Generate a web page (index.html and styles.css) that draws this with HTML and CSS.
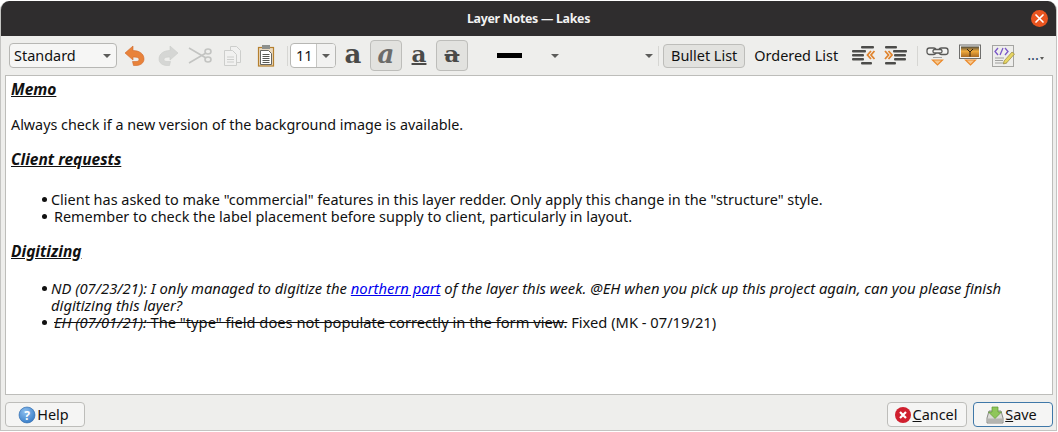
FILE: index.html
```html
<!DOCTYPE html>
<html lang="en">
<head>
<meta charset="utf-8">
<title>Layer Notes — Lakes</title>
<link rel="stylesheet" href="styles.css">
</head>
<body>
<div class="window">
  <header class="titlebar">
    <span class="title">Layer Notes — Lakes</span>
    <span class="close"><svg width="17" height="17" viewBox="0 0 17 17"><path d="M5 5l7 7M12 5l-7 7" stroke="#fff" stroke-width="1.700" stroke-linecap="round"/></svg></span>
  </header>
  <div class="toolbar">
    <div class="combo style-combo"><span>Standard</span><i class="caret"></i></div>
    <div class="icons first">
      <svg class="ic" viewBox="0 0 22 22"><path d="M1 8l8-7v4.500c6 0 11 3 11 8.500 0 4-3.500 6.500-8 6.500H9.500l-1-4H12c2 0 3-.8 3-2.200 0-1.600-2-2.300-6-2.300V15z" fill="#e8823a" stroke="#d0682a" stroke-width=".6"/></svg>
      <svg class="ic" viewBox="0 0 22 22"><path d="M21 8l-8-7v4.500c-6 0-11 3-11 8.500 0 4 3.500 6.500 8 6.500h2.500l1-4H10c-2 0-3-.8-3-2.200 0-1.600 2-2.300 6-2.300V15z" fill="#d5d6d4" stroke="#cbccca" stroke-width=".6"/></svg>
      <svg class="ic" viewBox="0 0 22 22"><g fill="none" stroke="#c3c4c2" stroke-width="1.600"><path d="M0 3l17 10M0 18L17 8"/><ellipse cx="19" cy="6.500" rx="3" ry="2.500"/><ellipse cx="19" cy="14.500" rx="3" ry="2.500"/></g></svg>
      <svg class="ic" viewBox="0 0 22 22"><g fill="#f1f1f0" stroke="#cdcecc"><path d="M8.500 1.500h6l4 4v12h-10z"/><path d="M2.500 5.500h8l4 4v11h-12z"/><path d="M5 12h7M5 14.500h7M5 17h7" fill="none"/></g></svg>
      <svg class="ic" viewBox="0 0 22 22"><rect x="4.500" y="2.500" width="15" height="18.500" fill="#ead9bf" stroke="#b5802f" stroke-width="1.200"/><rect x="8" y="0" width="8" height="4" fill="#8d908d"/><path d="M6.500 5.500h8l3 3v11h-11z" fill="#fff" stroke="#555753" stroke-width=".9"/><path d="M8.500 9.500h7M8.500 11.500h7M8.500 13.500h7M8.500 15.500h7M8.500 17.500h7" stroke="#555753"/></svg>
    </div>
    <i class="sep sep-a"></i>
    <div class="combo size-combo"><span class="size-val">11</span><span class="size-btn"><i class="caret"></i></span></div>
    <div class="fmt">
      <span class="fbtn"><span class="glyph bold">a</span></span>
      <span class="fbtn on"><span class="glyph ital">a</span></span>
      <span class="fbtn"><span class="glyph und">a</span></span>
      <span class="fbtn on"><span class="glyph str">a</span></span>
    </div>
    <div class="color"><i class="swatch"></i><i class="caret"></i></div>
    <div class="spacer"><i class="caret"></i></div>
    <i class="sep sep-b"></i>
    <span class="tbtn on">Bullet List</span>
    <span class="tbtn">Ordered List</span>
    <div class="indent">
      <svg class="ic" viewBox="0 0 24 22"><g fill="#4c4c4a"><rect x="9" y="1" width="13" height="2.500" rx="1"/><rect x="0" y="5" width="14" height="2.500" rx="1"/><rect x="0" y="9" width="12" height="2.500" rx="1"/><rect x="0" y="13" width="12" height="2.500" rx="1"/><rect x="9" y="17" width="11" height="2.500" rx="1"/></g><path d="M19 6l-3.500 4 3.500 4M22.500 6L19 10l3.500 4" fill="none" stroke="#e0842e" stroke-width="1.800"/></svg>
      <svg class="ic" viewBox="0 0 24 22"><g fill="#4c4c4a"><rect x="0" y="1" width="12" height="2.500" rx="1"/><rect x="8" y="5" width="14" height="2.500" rx="1"/><rect x="9" y="9" width="12" height="2.500" rx="1"/><rect x="9" y="13" width="12" height="2.500" rx="1"/><rect x="0" y="17" width="11" height="2.500" rx="1"/></g><path d="M0 6l3.500 4L0 14M3.500 6L7 10l-3.500 4" fill="none" stroke="#e0842e" stroke-width="1.800"/></svg>
    </div>
    <i class="sep sep-c"></i>
    <div class="ins">
      <svg class="ic" viewBox="0 0 24 22"><g fill="#f4f4f2" stroke="#5a5a58" stroke-width="1.300"><rect x="1" y="3" width="9" height="6.500" rx="2.500"/><rect x="13" y="3" width="9" height="6.500" rx="2.500"/><rect x="7" y="4.500" width="9" height="3.500" rx="1.500"/></g><path d="M7 12.500h9" stroke="#a5a5a3"/><path d="M6.500 15h10l-5 5z" fill="#f6c68c" stroke="#ea8a2c" stroke-width="1.200"/></svg>
      <svg class="ic" viewBox="0 0 24 22"><defs><linearGradient id="sky" x1="0" y1="0" x2="0" y2="1"><stop offset="0" stop-color="#4d4a3c"/><stop offset=".45" stop-color="#f0aa3c"/><stop offset="1" stop-color="#a86a24"/></linearGradient></defs><rect x=".5" y="0" width="21" height="13.500" fill="#f2f2f0" stroke="#6f6f6d"/><rect x="2" y="1.500" width="18" height="10.500" fill="url(#sky)"/><path d="M11 11.500V6.500M8 4l3 3 3-3" stroke="#332414" fill="none"/><path d="M6.500 15h10l-5 5z" fill="#f6c68c" stroke="#ea8a2c" stroke-width="1.200"/></svg>
      <svg class="ic" viewBox="0 0 24 22"><rect x=".5" y=".5" width="21" height="21" fill="#eeeeec" stroke="#a5a5a2"/><path d="M6 3L3 6.500 6 10M13 3l3 3.500-3 3.500M8 10l3-7" fill="none" stroke="#7a57c8" stroke-width="1.300"/><path d="M3 13h9M3 15.500h8M3 18h12" stroke="#a0a09e"/><path d="M12 16l8-9 2.500 2-8 9-3 1z" fill="#e6d563" stroke="#8c7a28" stroke-width=".6"/></svg>
    </div>
    <span class="more"><span class="dots">...</span><i class="caret tiny"></i></span>
  </div>
  <main class="editor">
    <h2>Memo</h2>
    <p class="para">Always check if a new version of the background image is available.</p>
    <h2 class="h-client">Client requests</h2>
    <ul class="list l-client">
      <li>Client has asked to make "commercial" features in this layer redder. Only apply this change in the "structure" style.</li>
      <li class="nudge">Remember to check the label placement before supply to client, particularly in layout.</li>
    </ul>
    <h2 class="h-dig">Digitizing</h2>
    <ul class="list l-dig">
      <li class="note">ND (07/23/21): I only managed to digitize the <a href="#">northern part</a> of the layer this week. @EH when you pick up this project again, can you please finish digitizing this layer?</li>
      <li class="nudge wide"><s><em>EH (07/01/21):</em> The "type" field does not populate correctly in the form view.</s> Fixed (MK - 07/19/21)</li>
    </ul>
  </main>
  <footer class="footer">
    <button class="btn help" type="button"><svg class="bi" viewBox="0 0 18 18"><defs><radialGradient id="hg" cx=".4" cy=".3" r=".8"><stop offset="0" stop-color="#8fc0ef"/><stop offset="1" stop-color="#2f76c4"/></radialGradient></defs><circle cx="9" cy="9" r="8" fill="url(#hg)" stroke="#2a66aa" stroke-width=".6"/><text x="9" y="13.500" text-anchor="middle" class="q">?</text></svg>Help</button>
    <div class="right">
      <button class="btn cancel" type="button"><svg class="bi" viewBox="0 0 18 18"><circle cx="9" cy="9" r="8" fill="#d0202f"/><path d="M6 6l6 6M12 6l-6 6" stroke="#fff" stroke-width="2.200"/></svg><span><u>C</u>ancel</span></button>
      <button class="btn save" type="button"><svg class="bi" viewBox="0 0 18 18"><path d="M3 5h12l2 7v5H1v-5z" fill="#dcdcd8" stroke="#8a8a86"/><rect x="2" y="12.500" width="14" height="3.500" fill="#b4b4b0"/><path d="M6 1h6v5h3.500L9 12.500 2.500 6H6z" fill="#8fc65a" stroke="#5f9a35" stroke-width=".7"/></svg><span><u>S</u>ave</span></button>
    </div>
  </footer>
</div>
</body>
</html>
```
FILE: styles.css
```css
* { box-sizing: border-box; }
html, body { margin: 0; padding: 0; background: #fff; }
body { width: 1058px; height: 432px; overflow: hidden; font-family: "Noto Sans", "Open Sans", sans-serif; font-size: 14.45px; color: #111; }
.window { width: 1057px; height: 430px; margin-top: 1px; background: #eeeeec; display: flex; flex-direction: column; border-radius: 9px 9px 0 0; overflow: hidden; border-right: 1px solid #c4c4c2; border-bottom: 1px solid #c4c4c2; border-left: 1px solid #c4c4c2; }
.titlebar { height: 35px; flex: none; background: #2f2d2e; color: #f2f2f2; position: relative; display: flex; align-items: center; justify-content: center; }
.title { font-weight: 700; font-size: 12.4px; letter-spacing: -.3px; }
.close { position: absolute; right: 8px; top: 9px; width: 17px; height: 17px; border-radius: 50%; background: #e9541f; display: flex; align-items: center; justify-content: center; }
.toolbar { height: 39px; flex: none; display: flex; align-items: center; padding-left: 8px; }
.combo { display: flex; align-items: center; flex: none; height: 25px; background: #fff; border: 1px solid #b7b7b4; border-radius: 4px; }
.caret { display: block; width: 0; height: 0; border-left: 4px solid transparent; border-right: 4px solid transparent; border-top: 4px solid #5c5c5a; }
.caret.tiny { border-left-width: 2.500px; border-right-width: 2.500px; border-top-width: 3px; margin-left: 1px; }
.style-combo { width: 108px; justify-content: space-between; padding: 0 5px 0 4px; background: #f6f6f5; }
.icons { display: flex; align-items: center; flex: none; }
.first { gap: 10.500px; margin-left: 7px; }
.ic { width: 22px; height: 22px; display: block; flex: none; overflow: visible; }
.sep { display: block; width: 1px; height: 20px; background: #d6d6d3; flex: none; }
.sep-a { margin-left: 11px; }
.size-combo { width: 46px; margin-left: 2px; overflow: hidden; }
.size-val { width: 25px; padding-left: 5px; }
.size-btn { flex: 1; height: 100%; background: #f2f2f1; border-left: 1px solid #c6c6c3; display: flex; align-items: center; justify-content: center; }
.fmt { display: flex; align-items: center; gap: 1px; margin-left: 1px; flex: none; }
.fbtn { width: 32px; height: 31px; display: flex; align-items: center; justify-content: center; border: 1px solid transparent; border-radius: 4px; }
.fbtn.on { background: #e2e2df; border-color: #bdbdba; }
.glyph { font-family: "DejaVu Serif", serif; font-size: 26px; line-height: 24px; color: #4a4a48; font-weight: 700; padding-bottom: 4px; }
.glyph.ital { font-style: italic; color: #6c6c6a; }
.glyph.und { font-size: 23px; text-decoration: underline; text-decoration-thickness: 2px; }
.glyph.str { font-size: 23px; text-decoration: line-through; text-decoration-thickness: 2px; }
.color { display: flex; align-items: center; flex: none; margin-left: 29px; }
.swatch { display: block; width: 25px; height: 5px; background: #000; margin-right: 29px; }
.spacer { margin-left: 86px; flex: none; }
.sep-b { margin-left: 5px; }
.tbtn { height: 24px; padding: 0 7px; display: flex; align-items: center; flex: none; border: 1px solid transparent; border-radius: 4px; white-space: nowrap; }
.tbtn.on { background: #e2e2df; border-color: #bdbdba; margin-left: 4px; }
.tbtn + .tbtn { margin-left: 1px; }
.indent { display: flex; gap: 9px; margin-left: 6px; flex: none; }
.indent .ic { width: 24px; }
.sep-c { margin-left: 8px; }
.ins { display: flex; gap: 9px; margin-left: 8px; flex: none; }
.ins .ic { width: 24px; }
.more { margin-left: 11px; display: flex; align-items: flex-end; line-height: 14px; flex: none; padding-bottom: 2px; }
.dots { color: #1d3b66; }
.more .caret { margin-bottom: 2px; }
.editor { flex: 1; min-height: 0; background: #fff; margin: 0 3px 0 4px; border: 1px solid #bdbdba; padding: 3px 5px 0 5px; overflow: hidden; line-height: 17px; }
h2 { margin: 0; font-size: 15.500px; font-weight: 700; font-style: italic; text-decoration: underline; line-height: 20px; }
.para { margin: 17px 0 0; font-size: 14.330px; }
.h-client { margin-top: 16px; }
.list { margin: 0; padding: 0 0 0 40px; list-style: none; }
.list li { position: relative; }
.list li::before { content: ""; position: absolute; left: -9px; top: 6px; width: 5px; height: 5px; border-radius: 50%; background: #111; }
.list li.nudge { text-indent: 3px; }
.list li.note { font-style: italic; font-size: 14.800px; }
.list li.wide { font-size: 14.700px; }
.l-client { margin-top: 22px; }
.h-dig { margin-top: 16px; }
.l-dig { margin-top: 19px; }
a { color: #0000ee; }
.footer { flex: none; height: 35px; display: flex; align-items: flex-start; justify-content: space-between; padding: 7px 3px 0 4px; }
.right { display: flex; gap: 6px; }
.btn { height: 25px; width: 80px; display: flex; align-items: center; justify-content: center; gap: 1px; padding: 0 3px 0 0; font: inherit; color: #111; background: #f5f5f4; border: 1px solid #bdbdba; border-radius: 4px; }
.bi { width: 18px; height: 18px; display: block; flex: none; }
.q { font: 700 12px "Noto Sans", sans-serif; fill: #fff; }
.btn.save { border-color: #3f78a8; }
```
